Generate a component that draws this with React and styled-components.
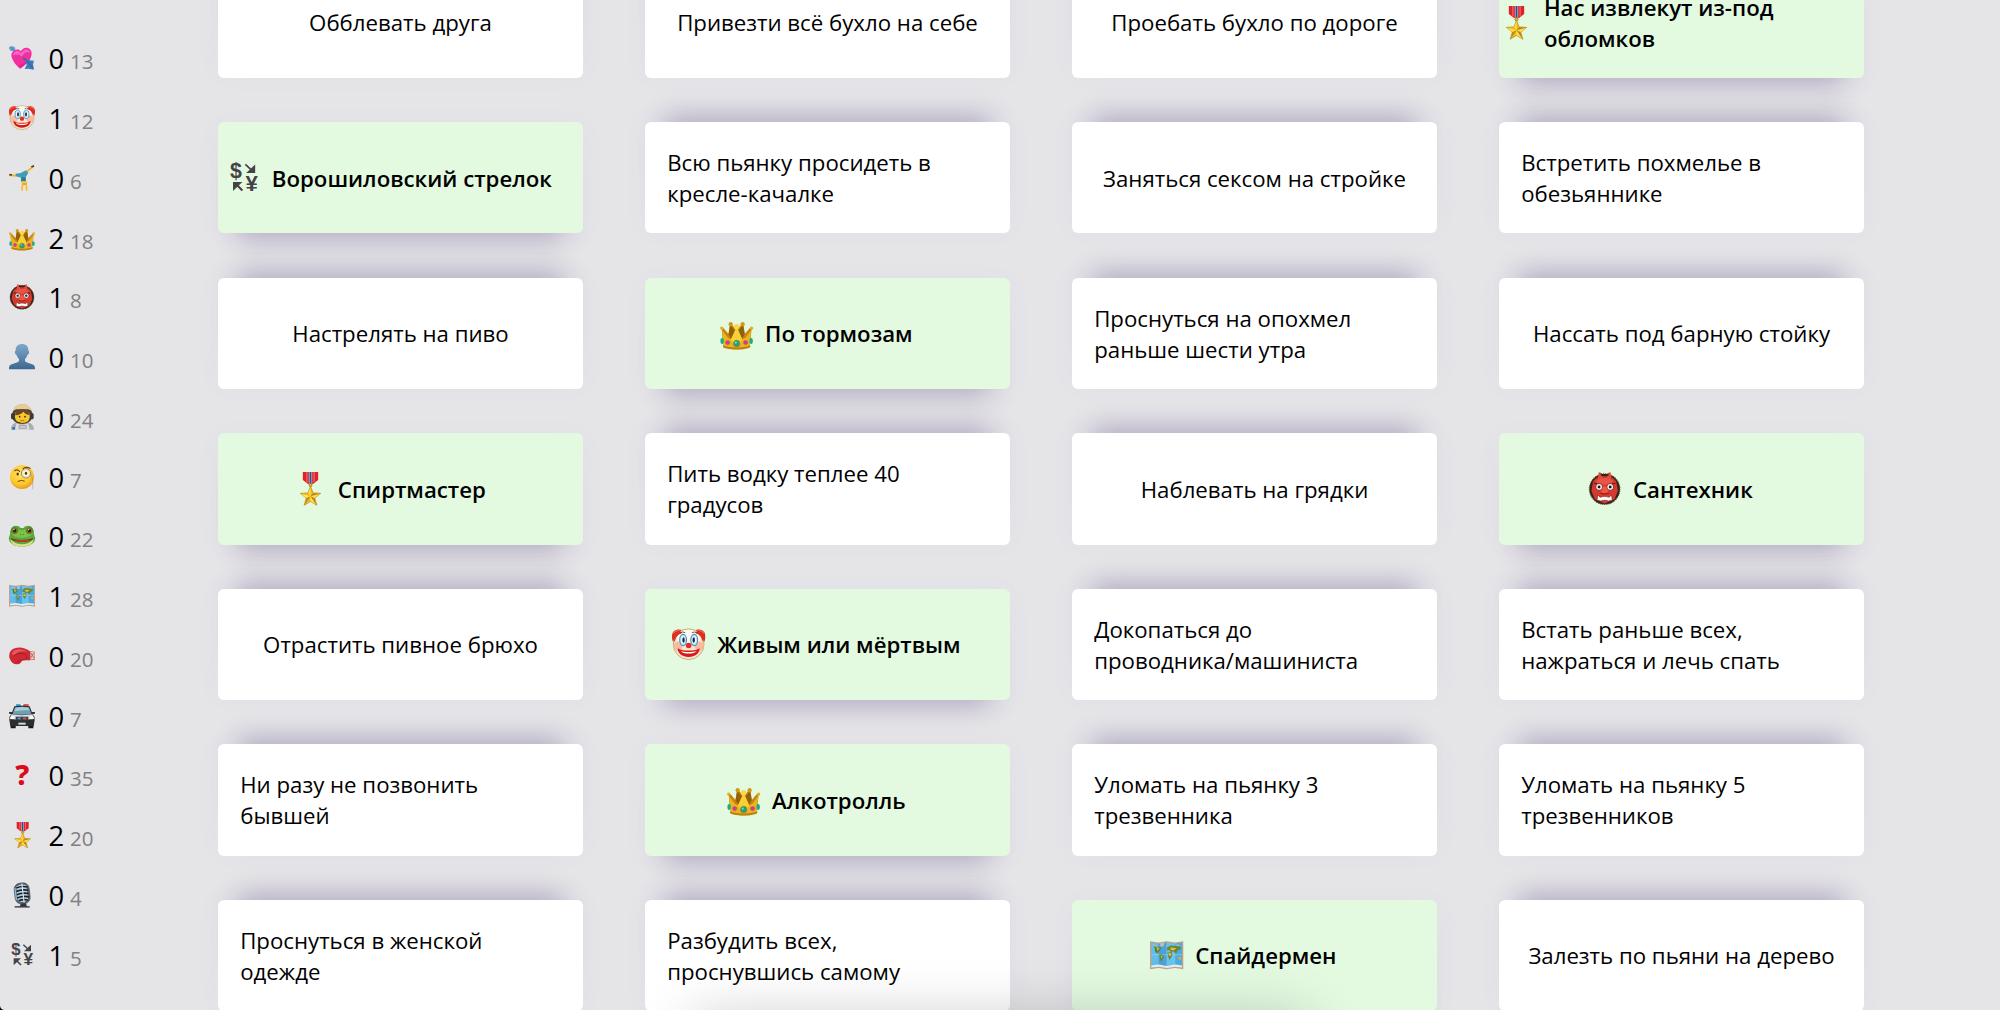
import React from "react";
import styled, { createGlobalStyle, css } from "styled-components";

const GlobalStyle = createGlobalStyle`
  * { box-sizing: border-box; }
  html, body { margin: 0; background: #e5e5e8; overflow: hidden; }
  body { font-family: "Open Sans", "Noto Sans", sans-serif; color: #000; }
`;

const Page = styled.div`
  display: flex;
  height: 1010px;
  overflow: hidden;
  position: relative;
  background: #e5e5e8;
`;

const Sidebar = styled.ul`
  list-style: none;
  margin: 0;
  padding: 28.4px 0 0 9px;
  width: 218px;
  flex: none;
  display: flex;
  flex-direction: column;
`;

const Stat = styled.li`
  height: 59.75px;
  flex: none;
  display: flex;
  align-items: center;
`;

const Count = styled.p`
  margin: 4px 0 0 13.5px;
  font-size: 27.4px;
  line-height: 36px;
  white-space: nowrap;
`;

const Total = styled.span`
  margin-left: -1.4px;
  font-size: 20.5px;
  color: #808080;
`;

const Icon = styled.svg`
  display: block;
  flex: none;
  width: ${(p) => p.$size}px;
  height: ${(p) => p.$size}px;
  overflow: visible;
`;

const Grid = styled.main`
  flex: none;
  width: 1646px;
  margin-top: -33.2px;
  display: grid;
  grid-template-columns: repeat(4, 365px);
  grid-auto-rows: 111.1px;
  column-gap: 62px;
  row-gap: 44.45px;
  align-content: start;
`;

const lifted = css`
  background: #e3fae1;
  font-weight: 600;
  box-shadow: 0 28px 26px -21px rgba(66, 42, 105, 0.27), 0 4px 26px rgba(110, 70, 190, 0.045);
`;

const plain = css`
  background: #fff;
  box-shadow: 0 -28px 26px -21px rgba(66, 42, 105, 0.27), 0 -4px 26px rgba(110, 70, 190, 0.045);
`;

const Card = styled.article`
  display: flex;
  align-items: center;
  justify-content: center;
  border-radius: 6px;
  ${(p) => (p.$done ? lifted : plain)}
`;

const Title = styled.p`
  margin: 0;
  padding: 0.6px 22.2px 0 ${(p) => (p.$withIcon ? 11.6 : 22.2)}px;
  font-size: 22.22px;
  line-height: 31.1px;
`;

const Word = styled.span`
  white-space: nowrap;
`;

const BottomShade = styled.div`
  position: absolute;
  left: 690px;
  top: 1016px;
  width: 620px;
  height: 80px;
  border-radius: 16px;
  box-shadow: 0 0 56px rgba(0, 0, 0, 0.2);
  pointer-events: none;
`;

const Corner = styled.div`
  position: absolute;
  left: 0;
  bottom: 0;
  width: 4px;
  height: 4px;
  background: radial-gradient(circle at 100% 0, transparent 3.4px, #000 4.2px);
`;

const art = {
  heart: (
    <>
      <path d="M1 6 9 3l9 4 2 9 7 8-5 4-8-9-9-1-5-7z" fill="#6ba5d8" />
      <path d="M4 5l20 20" stroke="#3d75ad" strokeWidth="3" />
      <path d="M9 39C4 27 10 16 22 14c6-1 11 1 14 5 4-8 13-13 22-9 10 4 12 16 8 26-5 13-17 24-33 35C22 62 13 51 9 39z" fill="#f02fa0" />
      <path d="M12 32c0-9 6-14 14-14 5 0 8 3 10 7 5-8 12-13 19-11 5 1 8 6 8 11-5-7-17-4-24 10-8-8-19-9-27-3z" fill="#ff7bcb" opacity=".75" />
      <path d="M33 71c16-11 28-22 33-35-5 10-18 19-35 24z" fill="#c9198c" opacity=".5" />
      <path d="M42 39l13 8" stroke="#2f6da8" strokeWidth="5" />
      <path d="M50 44l25 3-3 11 3 16-17-3-11 1 6-12z" fill="#3c7cb8" />
      <path d="M53 48l19 21" stroke="#285f94" strokeWidth="3" />
    </>
  ),
  clown: (
    <>
      <path d="M1 13C4 4 16 1 25 6L14 28 4 36C0 29-1 20 1 13zM77 13C74 4 62 1 53 6l11 22 10 8c4-7 5-16 3-23z" fill="#d92a1c" />
      <path d="M3 12c5-6 12-7 18-4M75 12c-5-6-12-7-18-4" stroke="#f4604c" strokeWidth="4" fill="none" />
      <circle cx="39" cy="38" r="36" fill="#f7e6cc" stroke="#bfa270" strokeWidth="2" />
      <ellipse cx="39" cy="22" rx="27" ry="18" fill="#fffaf0" />
      <circle cx="14" cy="43" r="11" fill="#f8af91" opacity=".75" />
      <circle cx="64" cy="43" r="11" fill="#f8af91" opacity=".75" />
      <path d="M2 24Q3 9 18 6l5 6Q10 16 6 32zM76 24Q75 9 60 6l-5 6q13 4 17 20z" fill="#dc3020" />
      <ellipse cx="26" cy="28" rx="8" ry="13" fill="#c8e6fa" stroke="#3f8fd0" strokeWidth="2.6" />
      <ellipse cx="52" cy="28" rx="8" ry="13" fill="#c8e6fa" stroke="#3f8fd0" strokeWidth="2.6" />
      <ellipse cx="26" cy="28" rx="4.3" ry="8" fill="#fff" />
      <ellipse cx="52" cy="28" rx="4.3" ry="8" fill="#fff" />
      <ellipse cx="27" cy="28" rx="2.8" ry="6.5" fill="#20242c" />
      <ellipse cx="51" cy="28" rx="2.8" ry="6.5" fill="#20242c" />
      <path d="M19 12q6-5 12-1M47 11q6-4 12 1" stroke="#5a3a20" strokeWidth="2" fill="none" />
      <circle cx="39" cy="41" r="6.5" fill="#e62b21" />
      <path d="M14 47c4 5 12 6 25 6s21-1 25-6c3 9-8 21-25 21S11 56 14 47z" fill="#d71919" />
      <path d="M20 54c8 3 30 3 38 0-4 5-10 6-19 6s-15-1-19-6z" fill="#fff" />
    </>
  ),
  cartwheel: (
    <>
      <path d="M4 31l31 2" stroke="#f5b92d" strokeWidth="6" strokeLinecap="round" />
      <path d="M1 29l8 1" stroke="#5a3a24" strokeWidth="5" />
      <path d="M49 23L72 5" stroke="#f5b92d" strokeWidth="6" strokeLinecap="round" />
      <path d="M67 6l8-4" stroke="#5a3a24" strokeWidth="5" />
      <path d="M20 26l15-2 16-8 7 7-8 14 1 13H36V38l-16-5z" fill="#3f9eb6" />
      <path d="M37 37h13v12H37z" fill="#247b9b" />
      <path d="M41 50l-2 25M51 50l2 25" stroke="#f9bd27" strokeWidth="5" strokeLinecap="round" />
      <circle cx="46" cy="55" r="6" fill="#e8a32a" />
      <path d="M39 52h13" stroke="#f9c94a" strokeWidth="5" />
    </>
  ),
  crown: (
    <>
      <path d="M7 60L4 28l4-2 12 14 3-22h5l11 13 11-13h5l3 22 12-14 4 2-3 32z" fill="#c7860b" />
      <path d="M20 40l4-22 13 16-11 17zM58 40l-4-22-13 16 11 17z" fill="#93610a" />
      <path d="M5 31l14 18 7 3 13-28 13 28 7-3 14-18-3 39c-12 8-50 8-62 0z" fill="#e9b321" />
      <path d="M39 23l13 29-6 13H32l-6-13z" fill="#f8d037" />
      <path d="M7 66c15 7 49 7 64 0v5c-12 7-52 7-64 0z" fill="#bd8111" />
      <circle cx="39" cy="23" r="6.5" fill="#f9d943" />
      <circle cx="25" cy="17" r="5" fill="#d39a18" />
      <circle cx="53" cy="17" r="5" fill="#d39a18" />
      <circle cx="4" cy="26" r="4" fill="#e4ae25" />
      <circle cx="74" cy="26" r="4" fill="#e4ae25" />
      <circle cx="39" cy="62" r="7.5" fill="#17a781" stroke="#a46f0a" strokeWidth="1.5" />
      <circle cx="18" cy="60" r="5" fill="#d730b5" stroke="#a46f0a" strokeWidth="1" />
      <circle cx="60" cy="60" r="5" fill="#d730b5" stroke="#a46f0a" strokeWidth="1" />
      <ellipse cx="5" cy="56" rx="4" ry="7" fill="#18ad87" />
      <ellipse cx="73" cy="56" rx="4" ry="7" fill="#18ad87" />
      <circle cx="37" cy="60" r="2.5" fill="#70dfbd" />
    </>
  ),
  oni: (
    <>
      <circle cx="39" cy="40" r="36" fill="#35251d" />
      <circle cx="39" cy="40" r="36" fill="none" stroke="#705232" strokeWidth="2.5" strokeDasharray="2 3" />
      <path d="M12 22Q22 8 39 10q17-2 27 12l4 22-8 20-23 10-23-10L8 44z" fill="#d8392e" />
      <path d="M23 15l2-14q5-1 7 5l2 10zM55 15L53 1q-5-1-7 5l-2 10z" fill="#e64a3b" />
      <path d="M30 3q9 6 18 0v6H30z" fill="#35251d" />
      <ellipse cx="39" cy="22" rx="19" ry="8" fill="#ed6150" opacity=".7" />
      <path d="M14 26l17 5M64 26l-17 5" stroke="#801612" strokeWidth="3.5" />
      <circle cx="26" cy="35" r="8" fill="#fff" stroke="#74150f" strokeWidth="2" />
      <circle cx="52" cy="35" r="8" fill="#fff" stroke="#74150f" strokeWidth="2" />
      <circle cx="26" cy="35" r="3.5" fill="#1c1816" />
      <circle cx="52" cy="35" r="3.5" fill="#1c1816" />
      <path d="M35 34h8l6 15q-10 6-20 0z" fill="#ef5643" />
      <path d="M29 49q10 5 20 0" stroke="#9b1d18" strokeWidth="3" fill="none" />
      <path d="M23 53l5 6q11-4 22 0l5-6 2 13-9 2q-9-4-18 0l-9-2z" fill="#fff" stroke="#79130f" strokeWidth="1.5" />
    </>
  ),
  silhouette: (
    <>
      <defs>
        <linearGradient id="silhouette" x1="0" y1="0" x2="0" y2="1">
          <stop offset="0" stopColor="#7fa8cc" />
          <stop offset="1" stopColor="#3c688f" />
        </linearGradient>
      </defs>
      <path d="M39 0c12 0 20 8 19 20 2 1 3 3 2 7s-3 5-5 6c-1 6-5 9-7 12v6c3 7 22 6 28 14 2 3 2 7 2 11H0c0-4 0-8 2-11 6-8 25-7 28-14v-6c-2-3-6-6-7-12-2-1-4-2-5-6s0-6 2-7C19 8 27 0 39 0z" fill="url(#silhouette)" />
    </>
  ),
  astronaut: (
    <>
      <path d="M6 77q0-18 15-21h38q15 3 16 21z" fill="#a9adb6" />
      <path d="M23 58h34l5 19H18z" fill="#dfe1e5" />
      <path d="M30 64h22v9H30z" stroke="#8b8d94" strokeWidth="2" fill="#c8ccd1" />
      <path d="M10 69h8v8h-8z" fill="#3c70c4" />
      <circle cx="40" cy="31" r="31" fill="#cfae70" />
      <path d="M11 22Q19 1 40 1t29 21z" fill="#e6cd97" />
      <path d="M10 34q0-16 12-18h36q12 2 12 18 0 24-30 26Q10 58 10 34z" fill="#4a4038" />
      <rect x="6" y="27" width="11" height="19" rx="5" fill="#3b3a3d" />
      <rect x="63" y="27" width="11" height="19" rx="5" fill="#3b3a3d" />
      <path d="M18 32q1-14 22-14t22 14v8q-2 17-22 17T18 40z" fill="#f8c72e" />
      <path d="M18 34q1-18 22-18t22 18q-13-2-19-11-8 10-25 11z" fill="#6a4526" />
      <circle cx="32" cy="38" r="2.6" fill="#40291c" />
      <circle cx="48" cy="38" r="2.6" fill="#40291c" />
      <path d="M34 49q6 3 12 0" stroke="#a35f12" strokeWidth="2.5" fill="none" />
      <path d="M12 44q4 12 22 12" stroke="#383838" strokeWidth="3" fill="none" />
    </>
  ),
  monocle: (
    <>
      <defs>
        <radialGradient id="monocle" cx=".45" cy=".35" r=".65">
          <stop offset="0" stopColor="#ffe864" />
          <stop offset=".7" stopColor="#fdc72e" />
          <stop offset="1" stopColor="#ec981b" />
        </radialGradient>
      </defs>
      <circle cx="39" cy="39" r="36" fill="url(#monocle)" />
      <path d="M17 20q8-5 15 2M42 14q11-7 21-1" stroke="#764311" strokeWidth="3.5" fill="none" strokeLinecap="round" />
      <ellipse cx="26" cy="30" rx="3.5" ry="4.5" fill="#5a310d" />
      <circle cx="51" cy="28" r="14" fill="#fff3bd" stroke="#8a8474" strokeWidth="3" />
      <circle cx="51" cy="28" r="11" fill="none" stroke="#d7d4c9" strokeWidth="2" />
      <ellipse cx="51" cy="28" rx="3.5" ry="4.5" fill="#5a310d" />
      <path d="M27 52q10-6 19-1" stroke="#764311" strokeWidth="3" fill="none" strokeLinecap="round" />
      <path d="M66 31q7 21 5 45" stroke="#8b8376" strokeWidth="2.5" fill="none" strokeDasharray="3 2" />
    </>
  ),
  frog: (
    <>
      <path d="M3 34Q3 8 20 8q11 0 14 7h10q3-7 14-7 17 0 17 26 6 11 2 20Q68 71 39 71T1 54q-4-9 2-20z" fill="#5ca83b" />
      <path d="M7 28q8-19 21-8 11 4 22 0 13-11 21 8-2 15-32 17Q9 43 7 28z" fill="#7cc247" />
      <circle cx="17" cy="23" r="9" fill="#b58b2b" stroke="#3c6a28" strokeWidth="2.5" />
      <circle cx="61" cy="23" r="9" fill="#b58b2b" stroke="#3c6a28" strokeWidth="2.5" />
      <circle cx="17" cy="23" r="5.5" fill="#211f17" />
      <circle cx="61" cy="23" r="5.5" fill="#211f17" />
      <circle cx="15" cy="20" r="2" fill="#fff" />
      <circle cx="59" cy="20" r="2" fill="#fff" />
      <path d="M33 33l3 3M45 33l-3 3" stroke="#396e25" strokeWidth="2.5" />
      <path d="M4 49q13 15 35 15t35-15q-2 22-35 22T4 49z" fill="#dfe08a" />
      <path d="M4 45q16 6 35 6t35-6q-8 12-35 12T4 45z" fill="#7a2f1e" />
      <path d="M12 50q27 4 54 0-10 6-27 6t-27-6z" fill="#d8402f" />
    </>
  ),
  map: (
    <>
      <path d="M0 5l20 3 19-3 20 3 19-3v66l-19-3-20 3-19-3-20 3z" fill="#c6a183" />
      <path d="M3 8l17 3v54L3 67z" fill="#61bdea" />
      <path d="M20 11l19-3v60l-19-3z" fill="#4aa2d8" />
      <path d="M39 8l20 3v54l-20 3z" fill="#67c4ef" />
      <path d="M59 11l16-3v59l-16-2z" fill="#4cace0" />
      <path d="M3 62l17-2 19 3 20-3 16 2v5l-16-2-20 3-19-3-17 2z" fill="#e7edf2" />
      <path d="M23 10l11-1-2 8-7 2zM5 13l12 1-6 5zM61 13l10 1-7 5z" fill="#b6bfc4" />
      <path d="M8 17l7 1 12 2-4 7-6 7-5-5-1-8z" fill="#527d35" />
      <path d="M14 19l9 2-5 8z" fill="#d0ae3e" />
      <path d="M22 34l8 3 2 5-6 11-3-8z" fill="#4d8838" />
      <path d="M25 40l5-1-4 8z" fill="#d9b83e" />
      <path d="M40 20l8-5 20 2 6 5-9 5-4 7-6-5-7 1-2-4-6 1z" fill="#668931" />
      <path d="M48 20l14 1-6 6-8-2z" fill="#e2b945" />
      <path d="M41 31l9-1 3 7-7 12-4-10z" fill="#638530" />
      <path d="M43 31l7 2-2 8-4-3zM65 44l6-3 3 6-5 2z" fill="#eba738" />
      <path d="M3 37h72" stroke="#b4e4f5" strokeWidth="1.5" opacity=".7" />
    </>
  ),
  glove: (
    <>
      <path d="M57 25l20 1 1 24-20 2z" fill="#c02c30" />
      <path d="M64 26l13 1v22l-13 1z" fill="#e0cbc1" />
      <path d="M65 29l10 16M75 29L65 45" stroke="#c6524f" strokeWidth="2.5" />
      <path d="M62 24Q44 11 24 14 4 16 1 34q-2 14 9 25 10 8 22 3 5-2 8-10h22z" fill="#cf2934" />
      <path d="M10 27q8-10 23-8 13 1 21 7-12-3-22 0-11 3-17 11-8-1-5-10z" fill="#ef6a6c" opacity=".7" />
      <path d="M15 38q13-11 28-6 12 3 10 13-1 7-12 6-10-1-18 7" stroke="#9a1d25" strokeWidth="2.5" fill="none" />
    </>
  ),
  car: (
    <>
      <path d="M21 3h17v6H21z" fill="#4aa8eb" />
      <path d="M41 3h18v6H41z" fill="#ed5550" />
      <path d="M35 3h8v6h-8z" fill="#fff" />
      <path d="M4 60h16v16H5zM58 60h16l-1 16H58z" fill="#17191b" />
      <path d="M16 10q23-5 46 0l9 24q7 6 6 17l-3 18H4L1 51q-1-11 6-17z" fill="#2b2e31" />
      <path d="M18 13q21-4 42 0l7 19q-28 6-56 0z" fill="#6f9fb0" />
      <path d="M20 14q19-4 38 0l3 8q-22-1-44 3z" fill="#a9cdd4" />
      <path d="M0 27h9v6H1zM69 27h9l-1 6h-8z" fill="#303336" />
      <path d="M8 34q31 5 62 0l6 14q-37 5-74 0z" fill="#dfe1e1" />
      <ellipse cx="10" cy="44" rx="6" ry="4" fill="#fffdf0" />
      <ellipse cx="68" cy="44" rx="6" ry="4" fill="#fffdf0" />
      <path d="M20 41h38v11H20z" fill="#3a4247" />
      <path d="M26 44h9v5h-9z" fill="#5597d9" />
      <path d="M42 44h10v5H42z" fill="#dc5b58" />
      <path d="M28 59h22v6H28z" fill="#d9d9d4" />
    </>
  ),
  question: (
    <text x="40" y="70" textAnchor="middle" fontFamily="Noto Sans, sans-serif" fontSize="86" fontWeight="800" fill="#e00b18">
      ?
    </text>
  ),
  medal: (
    <>
      <path d="M23 0h36v19L47 28H35L23 19z" fill="#df222b" />
      <path d="M31 0h3v25h-3zM48 0h3v24h-3z" fill="#f06562" />
      <path d="M37 0h8v28h-8z" fill="#aebbd2" />
      <path d="M39 0h4v28h-4z" fill="#334e89" />
      <circle cx="41" cy="31" r="3.5" fill="#eebf25" stroke="#a87010" strokeWidth="2" />
      <path d="M41 33l6 16 18 1-14 11 5 17-15-9-15 9 5-17-14-11 18-1z" fill="#efbc20" stroke="#b97e12" strokeWidth="1.5" strokeLinejoin="round" />
      <path d="M41 57V35l-5 14zM41 57l22-6-13 10zM41 57l13 19-13-8zM41 57L19 51l12 10z" fill="#ffe252" />
      <path d="M41 57L28 76l4-15zM41 57l13 19-4-15zM41 57l6-7 16 1z" fill="#a96c12" opacity=".7" />
    </>
  ),
  microphone: (
    <>
      <path d="M17 72h45v5H17z" fill="#555b61" />
      <path d="M37 60h13l4 14H32z" fill="#31363b" />
      <g transform="rotate(-7 40 34)">
        <rect x="17" y="3" width="45" height="62" rx="18" fill="#5d656d" stroke="#3f464d" strokeWidth="2" />
        <path d="M24 12q16-9 31 0v43q-15 10-31 0z" fill="#b7cddf" />
        <path d="M24 16q16-5 34 1M23 26q17-5 36 1M23 36q17-5 36 1M23 46q17-5 36 1M26 55q14-4 29 1" stroke="#17212a" strokeWidth="5" fill="none" />
        <path d="M42 5v57" stroke="#e5f0f6" strokeWidth="3" />
        <path d="M20 16v36" stroke="#89b7d8" strokeWidth="4" />
      </g>
    </>
  ),
  currency: (
    <>
      <text x="21" y="39" textAnchor="middle" fontFamily="Liberation Sans, sans-serif" fontSize="50" fontWeight="700" fill="#454247">
        $
      </text>
      <text x="58" y="70" textAnchor="middle" fontFamily="Liberation Sans, sans-serif" fontSize="52" fontWeight="700" fill="#454247">
        ¥
      </text>
      <path d="M43 8l14 13" stroke="#454247" strokeWidth="4" />
      <path d="M66 8v20H45z" fill="#454247" />
      <path d="M36 69L24 57" stroke="#454247" strokeWidth="5" />
      <path d="M14 49h22L14 70z" fill="#454247" />
    </>
  ),
};

function Emoji({ name, size }) {
  return (
    <Icon $size={size} viewBox="0 0 78 78" fill="none" aria-hidden="true">
      {art[name]}
    </Icon>
  );
}

const stats = [
  ["heart", 0, 13],
  ["clown", 1, 12],
  ["cartwheel", 0, 6],
  ["crown", 2, 18],
  ["oni", 1, 8],
  ["silhouette", 0, 10],
  ["astronaut", 0, 24],
  ["monocle", 0, 7],
  ["frog", 0, 22],
  ["map", 1, 28],
  ["glove", 0, 20],
  ["car", 0, 7],
  ["question", 0, 35],
  ["medal", 2, 20],
  ["microphone", 0, 4],
  ["currency", 1, 5],
];

const cards = [
  ["Обблевать друга"],
  ["Привезти всё бухло на себе"],
  ["Проебать бухло по дороге"],
  ["Нас извлекут из-под обломков", "medal"],
  ["Ворошиловский стрелок", "currency"],
  ["Всю пьянку просидеть в кресле-качалке"],
  ["Заняться сексом на стройке"],
  ["Встретить похмелье в обезьяннике"],
  ["Настрелять на пиво"],
  ["По тормозам", "crown"],
  ["Проснуться на опохмел раньше шести утра"],
  ["Нассать под барную стойку"],
  ["Спиртмастер", "medal"],
  ["Пить водку теплее 40 градусов"],
  ["Наблевать на грядки"],
  ["Сантехник", "oni"],
  ["Отрастить пивное брюхо"],
  ["Живым или мёртвым", "clown"],
  ["Докопаться до проводника/машиниста"],
  ["Встать раньше всех, нажраться и лечь спать"],
  ["Ни разу не позвонить бывшей"],
  ["Алкотролль", "crown"],
  ["Уломать на пьянку 3 трезвенника"],
  ["Уломать на пьянку 5 трезвенников"],
  ["Проснуться в женской одежде"],
  ["Разбудить всех, проснувшись самому"],
  ["Спайдермен", "map"],
  ["Залезть по пьяни на дерево"],
];

function keepSlashed(title) {
  return title
    .split(/(\S+\/\S+)/)
    .map((part, i) => (part.includes("/") ? <Word key={i}>{part}</Word> : part));
}

export default function App() {
  return (
    <Page>
      <GlobalStyle />
      <Sidebar>
        {stats.map(([icon, count, total]) => (
          <Stat key={icon}>
            <Emoji name={icon} size={26} />
            <Count>
              {count} <Total>{total}</Total>
            </Count>
          </Stat>
        ))}
      </Sidebar>
      <Grid>
        {cards.map(([title, icon]) => (
          <Card key={title} $done={Boolean(icon)}>
            {icon && <Emoji name={icon} size={33.3} />}
            <Title $withIcon={Boolean(icon)}>{keepSlashed(title)}</Title>
          </Card>
        ))}
      </Grid>
      <BottomShade />
      <Corner />
    </Page>
  );
}
